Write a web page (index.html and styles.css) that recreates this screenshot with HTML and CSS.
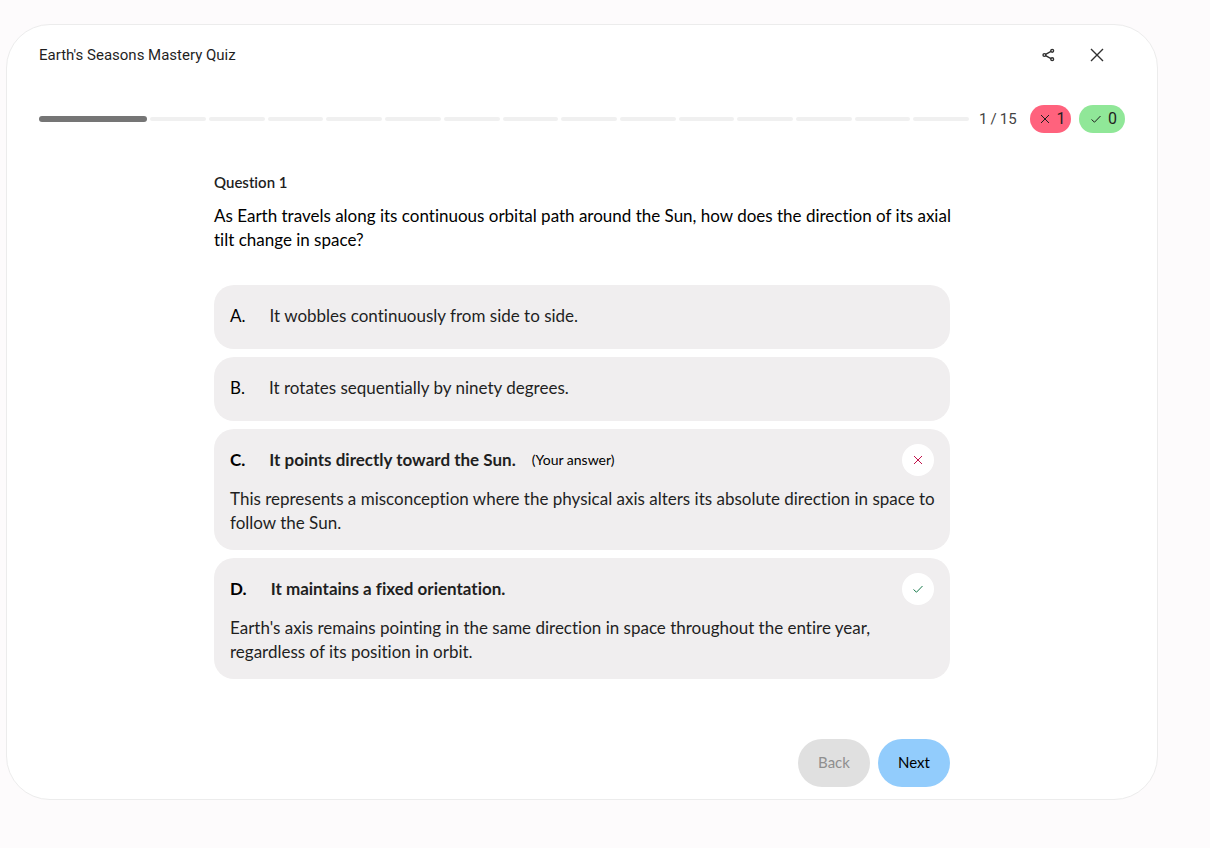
FILE: index.html
```html
<!DOCTYPE html>
<html lang="en">
<head>
  <meta charset="utf-8">
  <meta name="viewport" content="width=device-width, initial-scale=1">
  <title>Earth's Seasons Mastery Quiz</title>
  <link rel="stylesheet" href="styles.css">
</head>
<body>
<main class="card">
  <header class="header">
    <h1 class="title">Earth's Seasons Mastery Quiz</h1>
    <button class="icon-btn" type="button" aria-label="Share">
      <svg width="14" height="14" viewBox="0 0 14 14"><path d="M3.6 6.3 9 3.4M3.6 7.7 9 10.6"/><circle cx="2.4" cy="7" r="1.4"/><circle cx="10.2" cy="2.8" r="1.4"/><circle cx="10.2" cy="11.2" r="1.4"/></svg>
    </button>
    <button class="icon-btn" type="button" aria-label="Close">
      <svg width="14" height="14" viewBox="0 0 14 14"><path d="M1 1l12 12M13 1L1 13"/></svg>
    </button>
  </header>

  <div class="status">
    <div class="progress">
      <span class="seg current"></span>
      <span class="seg"></span><span class="seg"></span><span class="seg"></span><span class="seg"></span><span class="seg"></span><span class="seg"></span><span class="seg"></span>
      <span class="seg"></span><span class="seg"></span><span class="seg"></span><span class="seg"></span><span class="seg"></span><span class="seg"></span><span class="seg"></span>
    </div>
    <span class="count">1&thinsp;/&thinsp;15</span>
    <span class="score wrong">
      <svg width="10" height="10" viewBox="0 0 10 10"><path d="M1 1l8 8M9 1L1 9"/></svg>
      1
    </span>
    <span class="score right">
      <svg width="10" height="10" viewBox="0 0 10 10"><path d="M0.5 5.5 3.5 8.2 9.5 2"/></svg>
      0
    </span>
  </div>

  <section class="quiz">
    <h2 class="number">Question 1</h2>
    <p class="question">As Earth travels along its continuous orbital path around the Sun, how does the direction of its axial tilt change in space?</p>

    <ul class="options">
      <li class="option">
        <div class="answer"><span class="letter">A.</span><span>It wobbles continuously from side to side.</span></div>
      </li>
      <li class="option">
        <div class="answer"><span class="letter">B.</span><span>It rotates sequentially by ninety degrees.</span></div>
      </li>
      <li class="option">
        <div class="answer marked">
          <span class="letter">C.</span><span>It points directly toward the Sun.</span>
          <span class="yours">(Your answer)</span>
          <span class="mark bad"><svg width="10" height="10" viewBox="0 0 10 10"><path d="M1 1l8 8M9 1L1 9"/></svg></span>
        </div>
        <p class="reason">This represents a misconception where the physical axis alters its absolute direction in space to follow the Sun.</p>
      </li>
      <li class="option">
        <div class="answer marked">
          <span class="letter">D.</span><span>It maintains a fixed orientation.</span>
          <span class="mark good"><svg width="10" height="10" viewBox="0 0 10 10"><path d="M0.5 5.5 3.5 8.2 9.5 2"/></svg></span>
        </div>
        <p class="reason">Earth's axis remains pointing in the same direction in space throughout the entire year, regardless of its position in orbit.</p>
      </li>
    </ul>

    <div class="actions">
      <button class="btn" type="button" disabled>Back</button>
      <button class="btn next" type="button">Next</button>
    </div>
  </section>
</main>
</body>
</html>
```
FILE: styles.css
```css
* { box-sizing: border-box; }
body {
  margin: 0;
  padding: 24px 52px 48px 6px;
  background: #fdfbfc;
  color: #1f1f1f;
  font: 17px/24px Lato, Roboto, sans-serif;
  font-variant-ligatures: no-common-ligatures;
}
h1, h2, p, ul { margin: 0; padding: 0; }
button { font: inherit; border: 0; cursor: pointer; }
svg { fill: none; stroke: currentColor; flex: none; }

.card {
  padding: 10px 32px 12px;
  background: #fff;
  border: 1px solid #ececec;
  border-radius: 44px;
}

/* top bar */
.header {
  display: flex;
  align-items: center;
  gap: 8px;
  height: 40px;
  padding-right: 8px;
}
.title { flex: 1; font-family: Roboto, sans-serif; font-size: 15px; font-weight: 400; }
.icon-btn {
  display: flex;
  align-items: center;
  justify-content: center;
  width: 40px;
  height: 40px;
  padding: 0;
  border-radius: 50%;
  background: none;
  color: #303030;
}
.icon-btn svg { stroke-width: 1.4; }

/* progress */
.status {
  display: flex;
  align-items: center;
  height: 28px;
  margin-top: 30px;
  font-family: Roboto, sans-serif;
  font-size: 16px;
}
.progress { display: flex; flex: 1; align-items: center; gap: 3px; }
.seg { flex: 56; height: 4px; border-radius: 2px; background: #f0f0f0; }
.seg.current { flex: 109; height: 6px; border-radius: 3px; background: #757575; }
.count { width: 61px; padding-left: 10px; color: #444; font-size: 15px; }
.score {
  display: flex;
  align-items: center;
  justify-content: center;
  gap: 7px;
  height: 28px;
  padding-left: 4px;
  border-radius: 14px;
}
.wrong { width: 41px; background: #ff627d; }
.right { width: 46px; margin-left: 8px; background: #90e798; }

/* question */
.quiz { max-width: 736px; margin: 37px auto 0; }
.number { font-size: 15px; font-weight: 600; }
.question { margin: 10px -8px 0 0; color: #000; }
.options { display: grid; gap: 8px; margin-top: 33px; list-style: none; }
.option { padding: 15px 16px; border-radius: 20px; background: #f0eeef; }
.answer { display: flex; align-items: center; min-height: 34px; padding-bottom: 2px; }
.letter { margin-right: 24px; color: #000; }
.marked { min-height: 32px; padding-bottom: 0; font-weight: 700; }
.yours { margin-left: 16px; color: #000; font-size: 14px; font-weight: 400; }
.mark {
  display: flex;
  align-items: center;
  justify-content: center;
  width: 32px;
  height: 32px;
  margin-left: auto;
  border-radius: 50%;
  background: #fff;
}
.bad { color: #c2124a; }
.good { color: #16794a; }
.reason { margin: 11px -8px 0 0; }

.actions { display: flex; justify-content: flex-end; gap: 8px; margin-top: 60px; }
.btn {
  width: 72px;
  height: 48px;
  padding: 0 0 2px;
  border-radius: 24px;
  background: #e0e0e0;
  font-size: 15px;
}
.btn:disabled { color: #8f8f8f; cursor: default; }
.next { background: #92ccfc; color: #000; }
```
